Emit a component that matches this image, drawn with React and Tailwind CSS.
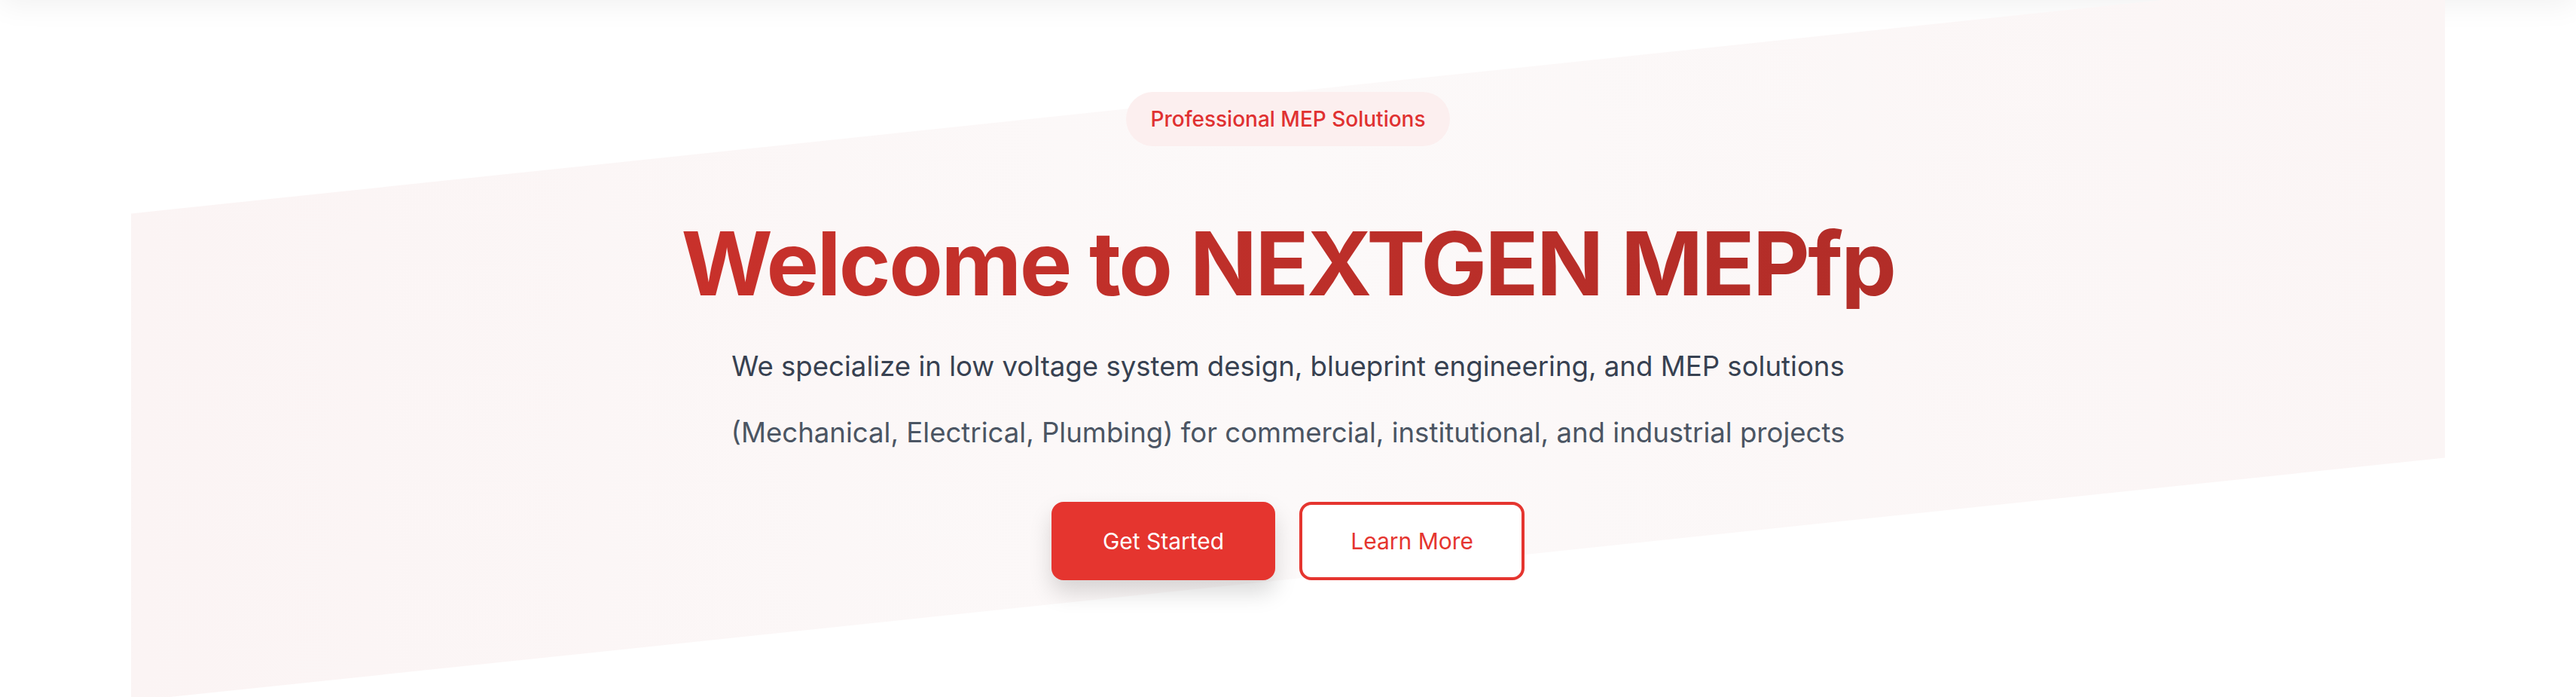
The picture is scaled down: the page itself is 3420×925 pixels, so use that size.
import React from "react";

function Hero() {
  return (
    <section className="relative h-[925px] overflow-hidden bg-white font-['Inter',sans-serif]">
      {/* header shadow from the nav scrolled above */}
      <div className="absolute left-0 right-0 top-[-120px] h-[120px] bg-white shadow-[0_6px_40px_rgba(0,0,0,0.06)]"></div>

      {/* skewed backdrop */}
      <div className="absolute left-[174px] right-[174px] top-[122px] h-[647px] -skew-y-6 bg-gradient-to-r from-[#fbf4f4] via-[#fcf9f9] to-[#fbf5f5]"></div>

      <div className="relative flex flex-col items-center pt-[122px] text-center">
        <span className="rounded-full bg-[#fcefef] px-8 py-4 text-[28px] leading-[40px] font-medium text-[#e03131]">
          Professional MEP Solutions
        </span>

        <h1 className="mt-[96px] bg-gradient-to-r from-[#c8312b] to-[#b22d28] bg-clip-text text-[117px] leading-[120px] font-bold tracking-[-2.5px] text-transparent">
          Welcome to NEXTGEN MEPfp
        </h1>

        <p className="mt-12 text-[36.6px] leading-[56px] text-[#374151]">
          We specialize in low voltage system design, blueprint engineering, and MEP solutions
        </p>
        <p className="mt-8 text-[36.6px] leading-[56px] text-[#4b5563]">
          (Mechanical, Electrical, Plumbing) for commercial, institutional, and industrial projects
        </p>

        <div className="mt-[64px] flex gap-8">
          <button className="rounded-2xl border-4 border-[#e5352f] bg-[#e5352f] px-16 py-6 text-[30px] leading-[48px] text-white shadow-[0_16px_30px_rgba(0,0,0,0.15)]">
            Get Started
          </button>
          <button className="rounded-2xl border-4 border-[#e5352f] bg-white px-16 py-6 text-[30px] leading-[48px] text-[#e5352f]">
            Learn More
          </button>
        </div>
      </div>
    </section>
  );
}

export default function App() {
  return <Hero />;
}
